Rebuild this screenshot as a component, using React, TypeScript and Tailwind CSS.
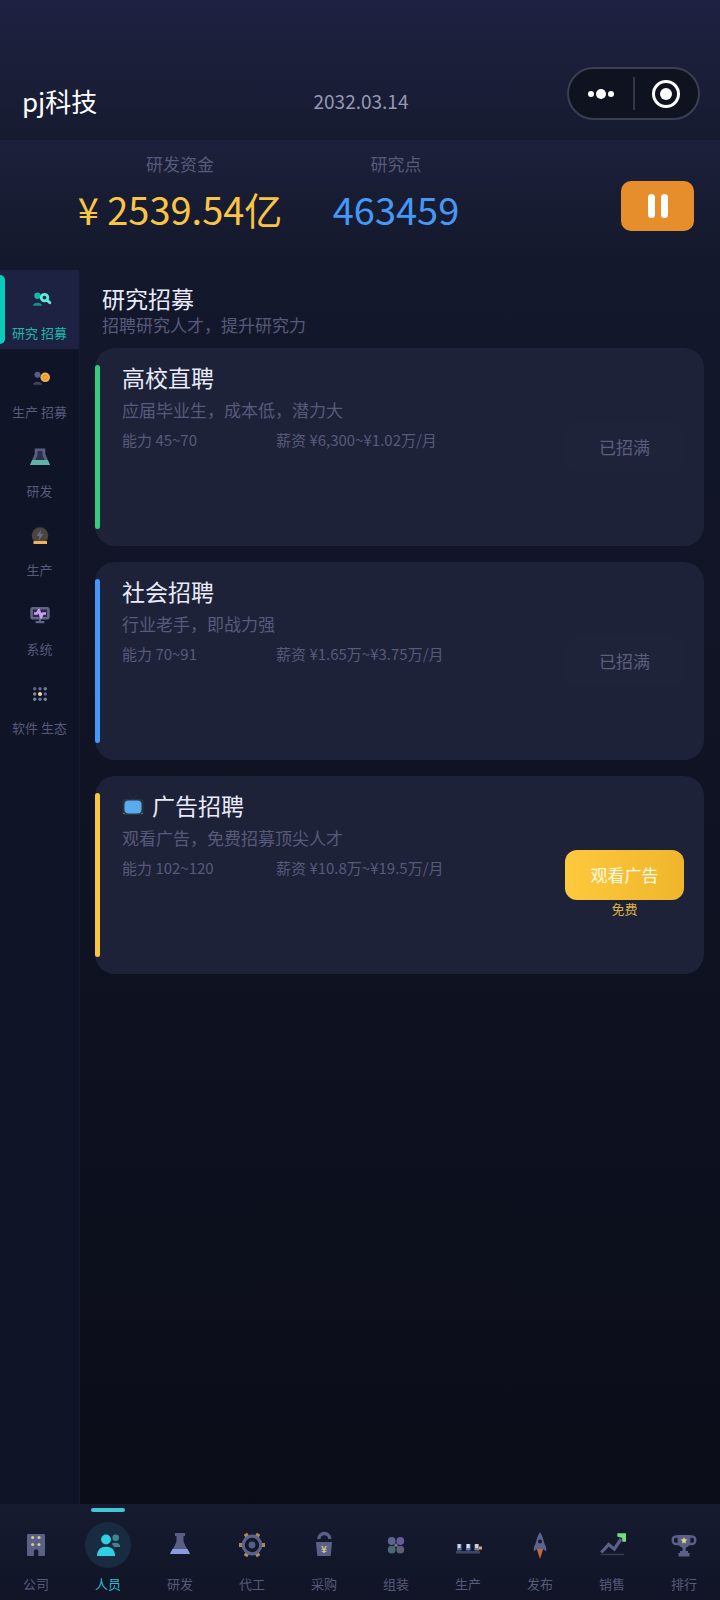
import { useState, ReactNode } from 'react';

interface Entry {
  id: string;
  label: string;
  icon: ReactNode;
}

interface Channel {
  id: string;
  title: string;
  desc: string;
  ability: string;
  salary: string;
  bar: string;
  ad?: boolean;
}

const sideItems: Entry[] = [
  {
    id: 'research-hire',
    label: '研究 招募',
    icon: (
      <>
        <circle cx="9.5" cy="8.7" r="3.2" fill="#14b8a6" />
        <path d="M5 18.7c0-2 2-3 4.5-3s4.5 1 4.5 3z" fill="#178f88" />
        <path d="M18.8 13l3 2.7" stroke="#5eead4" strokeWidth="3" strokeLinecap="round" />
        <circle cx="16.5" cy="10.6" r="3.3" fill="#1d2c4c" stroke="#5eead4" strokeWidth="2.8" />
      </>
    ),
  },
  {
    id: 'factory-hire',
    label: '生产 招募',
    icon: (
      <>
        <circle cx="9.5" cy="8.7" r="3" fill="#5a5d8c" />
        <path d="M5 18.7c0-2 2-3 4.5-3s4.5 1 4.5 3z" fill="#3f4360" />
        <circle cx="17.2" cy="11.3" r="4.8" fill="#f5ad4e" />
        <circle cx="17.2" cy="11.3" r="2" stroke="#dc8b2c" strokeWidth="1" />
      </>
    ),
  },
  {
    id: 'research',
    label: '研发',
    icon: (
      <>
        <path d="M6.7 3.5h10.6V9L22 20H2L6.7 9z" fill="#5a5e80" />
        <path d="M9.5 6h5v4l2 5h-9l2-5z" fill="#293048" />
        <path d="M4.2 15h15.6L22 20H2z" fill="#5fb3a6" />
      </>
    ),
  },
  {
    id: 'production',
    label: '生产',
    icon: (
      <>
        <circle cx="12" cy="11.5" r="8.3" fill="#4a443f" />
        <path d="M13 5.5L8.5 12h3l-1 5 5-7h-3z" fill="#666a8c" />
        <rect x="5.5" y="17" width="13.5" height="3" fill="#f2b15c" />
      </>
    ),
  },
  {
    id: 'system',
    label: '系统',
    icon: (
      <>
        <rect x="3.6" y="5.2" width="16.8" height="10" rx="1.5" fill="#2a2748" stroke="#626684" strokeWidth="2.6" />
        <path d="M12 16v3M8.5 19.2h7" stroke="#626684" strokeWidth="2.2" strokeLinecap="round" />
        <path d="M6 10.5h3l2-3.5 2 7.5 1.5-4H18" stroke="#c4a0f5" strokeWidth="2.6" strokeLinejoin="round" />
      </>
    ),
  },
  {
    id: 'software',
    label: '软件 生态',
    icon: (
      <>
        <circle cx="6.7" cy="6.7" r="1.7" fill="#5f6296" />
        <circle cx="12" cy="6.7" r="1.7" fill="#7563ad" />
        <circle cx="17.3" cy="6.7" r="1.7" fill="#5a8a8a" />
        <circle cx="6.7" cy="12" r="1.7" fill="#8d8496" />
        <circle cx="12" cy="12" r="2" fill="#f4e08a" />
        <circle cx="17.3" cy="12" r="1.7" fill="#5a5fa8" />
        <circle cx="6.7" cy="17.3" r="1.7" fill="#5c8f85" />
        <circle cx="12" cy="17.3" r="1.7" fill="#6a72ae" />
        <circle cx="17.3" cy="17.3" r="1.7" fill="#7c7f98" />
      </>
    ),
  },
];

const tabs: Entry[] = [
  {
    id: 'company',
    label: '公司',
    icon: (
      <>
        <path d="M6 3h16a1 1 0 0 1 1 1v20a1 1 0 0 1-1 1h-5.7v-4.5a2.2 2.2 0 0 0-4.4 0V25H6a1 1 0 0 1-1-1V4a1 1 0 0 1 1-1z" fill="#5c6086" />
        <g fill="#d3cf90">
          <circle cx="10.6" cy="6.6" r="1.5" />
          <circle cx="17" cy="6.6" r="1.5" />
          <circle cx="10.6" cy="13.5" r="1.5" />
          <circle cx="17" cy="13.5" r="1.5" />
        </g>
      </>
    ),
  },
  {
    id: 'staff',
    label: '人员',
    icon: (
      <>
        <circle cx="12" cy="8.5" r="4.9" fill="#2fd0e4" />
        <path d="M3 25c0-6 3.5-9.2 9-9.200S21 19 21 25z" fill="#2fd0e4" />
        <circle cx="21.7" cy="6.7" r="3.3" fill="#3f8790" />
        <path d="M17.8 12.8c1-.8 2.3-1.1 3.9-1.1 2.8 0 4.5 1.7 4.5 4.3h-6z" fill="#3f8790" />
      </>
    ),
  },
  {
    id: 'rd',
    label: '研发',
    icon: (
      <>
        <path d="M9 2h10v3h-1.5v4c0 3.5 3 7 6.5 14H4c3.5-7 6.5-10.5 6.5-14V5H9z" fill="#5a5e84" />
        <path d="M6.5 18h15L24 23H4z" fill="#8b9ae0" />
      </>
    ),
  },
  {
    id: 'oem',
    label: '代工',
    icon: (
      <>
        <g stroke="#b0885f" strokeWidth="4">
          <path d="M1 14h4M23 14h4M7.5 2.7l2 3.5M18.5 21.8l2 3.5M20.5 2.7l-2 3.5M9.5 21.8l-2 3.5" />
        </g>
        <circle cx="14" cy="14" r="8.8" stroke="#5c6187" strokeWidth="3.2" />
        <circle cx="14" cy="14" r="3.4" fill="#536083" />
      </>
    ),
  },
  {
    id: 'purchase',
    label: '采购',
    icon: (
      <>
        <path d="M8.8 8a5.5 5.5 0 0 1 11 0" stroke="#5c6086" strokeWidth="3.4" />
        <path d="M6 11h16l-1.3 14H7.3z" fill="#5c6086" />
        <text x="14" y="21.5" textAnchor="middle" fontSize="10" fontWeight="700" fill="#cdc785">¥</text>
      </>
    ),
  },
  {
    id: 'assembly',
    label: '组装',
    icon: (
      <>
        <path d="M10 10l8 8M18 10l-8 8" stroke="#4d5275" strokeWidth="1.5" />
        <circle cx="9.7" cy="10" r="3.9" fill="#5d648a" />
        <circle cx="18.3" cy="10" r="3.9" fill="#665a98" />
        <circle cx="9.7" cy="18.6" r="3.9" fill="#466b74" />
        <circle cx="18.3" cy="18.6" r="3.9" fill="#5f6078" />
        <circle cx="14" cy="14.3" r="1.5" fill="#71759a" />
      </>
    ),
  },
  {
    id: 'line',
    label: '生产',
    icon: (
      <>
        <rect x="2" y="20" width="24" height="2.6" fill="#3f435f" />
        <rect x="3" y="13" width="4.5" height="6.5" fill="#5f6fa0" />
        <rect x="12" y="13" width="4.5" height="6.5" fill="#5f7db4" />
        <rect x="20.5" y="13" width="4.5" height="6.5" fill="#7b7f96" />
        <rect x="3.8" y="13" width="2.8" height="4" fill="#c8d4ee" />
        <rect x="12.8" y="13" width="2.8" height="4" fill="#d4e4fa" />
        <rect x="21.2" y="13" width="2.8" height="4" fill="#cfd3dd" />
        <rect x="25" y="15.5" width="3" height="3" fill="#d9a86c" />
      </>
    ),
  },
  {
    id: 'launch',
    label: '发布',
    icon: (
      <>
        <path d="M10.8 18h6.4L14 28z" fill="#c2683c" />
        <path d="M14 1c2.2 3.5 3.5 7 4 10.5l2.2 5v4L17 18h-6l-3.2 2.5v-4l2.2-5C10.5 8 11.8 4.5 14 1z" fill="#5a648e" />
        <circle cx="14" cy="10.5" r="2" fill="#161a30" />
      </>
    ),
  },
  {
    id: 'sales',
    label: '销售',
    icon: (
      <>
        <path d="M2.5 23.5h23.5" stroke="#343850" strokeWidth="1.5" />
        <path d="M3.3 21.5l7.4-8 5.6 4.7L23 8" stroke="#5c6086" strokeWidth="3.2" />
        <path d="M19.3 2.2h8.7v8.5h-3.6l-.3-3.7-4.8-1.5z" fill="#6fdf7c" />
      </>
    ),
  },
  {
    id: 'rank',
    label: '排行',
    icon: (
      <>
        <path d="M9 5.5H6.5c-2.2 0-3.8 1.5-3.8 3.7s1.6 3.8 4.3 3.8h3M19 5.5h2.5c2.2 0 3.8 1.5 3.8 3.7S23.7 13 21 13h-3" stroke="#5c6086" strokeWidth="2.4" />
        <path d="M7.5 4h13v5.5c0 4-2 6.5-4.8 7.2V20h2.3v2h1.5v3.5h-11V22H10v-2h2.5v-3.3c-3-.7-5-3.2-5-7.2z" fill="#5c6086" />
        <path d="M14 6.2l1 2.1 2.3.3-1.7 1.6.4 2.3-2-1.1-2 1.1.4-2.3-1.7-1.6 2.3-.3z" fill="#ddd68a" />
      </>
    ),
  },
];

const channels: Channel[] = [
  {
    id: 'campus',
    title: '高校直聘',
    desc: '应届毕业生，成本低，潜力大',
    ability: '45~70',
    salary: '¥6,300~¥1.02万/月',
    bar: 'bg-[#34cb80]',
  },
  {
    id: 'social',
    title: '社会招聘',
    desc: '行业老手，即战力强',
    ability: '70~91',
    salary: '¥1.65万~¥3.75万/月',
    bar: 'bg-[#4498fa]',
  },
  {
    id: 'ad',
    title: '广告招聘',
    desc: '观看广告，免费招募顶尖人才',
    ability: '102~120',
    salary: '¥10.8万~¥19.5万/月',
    bar: 'bg-[#fac540]',
    ad: true,
  },
];

function TvIcon() {
  return (
    <svg className="size-[22px]" viewBox="0 0 22 22" aria-hidden="true">
      <path d="M7 1l4 4 4-4" fill="none" stroke="#272d42" strokeWidth="1" />
      <rect x="0.5" y="5" width="21" height="16" rx="2" fill="#26343f" />
      <rect x="2.5" y="6.5" width="17" height="13" rx="4" fill="#5aaaf0" />
      <circle cx="2" cy="19.5" r="0.8" fill="#6f7c52" />
      <circle cx="20" cy="19.5" r="0.8" fill="#6f7c52" />
    </svg>
  );
}

function ChannelCard({ channel }: { channel: Channel }) {
  return (
    <article className="flex min-h-[198px] rounded-[20px] bg-[#1d2238] py-[17px] pr-5">
      <div className={`w-[5px] shrink-0 rounded-full ${channel.bar}`} />
      <div className="ml-[22px] flex-1">
        <h2 className="flex items-center gap-2 text-[23px] leading-6 text-[#e9ebfa]">
          {channel.ad && <TvIcon />}
          {channel.title}
        </h2>
        <p className="mt-2.5 text-[17px] leading-[22px]">{channel.desc}</p>
        <div className="mt-2 flex text-[15px] leading-[22px]">
          <span className="w-[154px]">能力 {channel.ability}</span>
          <span>薪资 {channel.salary}</span>
        </div>
      </div>
      <div className="relative self-center">
        {channel.ad ? (
          <>
            <button type="button" className="block h-[50px] w-[119px] rounded-xl bg-linear-to-r from-[#fec93c] to-[#efb62b] text-[17px] text-[#fffbe8]">
              观看广告
            </button>
            <span className="absolute inset-x-0 top-full text-center text-[13px] leading-[18px] text-[#dcae45]">免费</span>
          </>
        ) : (
          <button type="button" disabled className="block h-[50px] w-[119px] rounded-xl bg-[#1f233a] text-[17px] text-[#5b5e7d]">
            已招满
          </button>
        )}
      </div>
    </article>
  );
}

export default function App() {
  const [section, setSection] = useState('research-hire');
  const [tab, setTab] = useState('staff');
  const [paused, setPaused] = useState(false);

  return (
    <div className="flex min-h-screen flex-col bg-linear-to-b from-[#151a30] to-[#0a0c17] font-['Noto_Sans_CJK_SC',sans-serif] text-[#575a7a]">
      <header className="grid grid-cols-[1fr_auto_1fr] items-end bg-linear-to-b from-[#1e2141] to-[#171b30] pt-[67px] pr-5 pb-5 pl-[22px]">
        <h1 className="text-[26px] leading-[38px] text-white">pj科技</h1>
        <time className="text-[19px] leading-[38px] text-[#9598b3]">2032.03.14</time>
        <div className="flex h-[53px] w-[133px] items-center justify-self-end rounded-full border-2 border-[#3c3f52] bg-[#0f121f]">
          <button type="button" aria-label="更多" className="flex h-full flex-1 items-center justify-center gap-0.5">
            <span className="size-1.5 rounded-full bg-white" />
            <span className="size-2.5 rounded-full bg-white" />
            <span className="size-1.5 rounded-full bg-white" />
          </button>
          <span className="h-[33px] w-0.5 bg-[#34374a]" />
          <button type="button" aria-label="关闭" className="flex h-full flex-1 items-center justify-center">
            <span className="flex size-7 items-center justify-center rounded-full border-3 border-white">
              <span className="size-3 rounded-full bg-white" />
            </span>
          </button>
        </div>
      </header>

      <section className="flex items-end bg-linear-to-b from-[#1c203a] to-[#14182b] pt-3 pr-[26px] pb-[37px] pl-[72px] text-center">
        <div className="w-[216px]">
          <p className="text-[17px] leading-6">研发资金</p>
          <p className="mt-[9px] text-[38px] leading-[48px] whitespace-nowrap text-[#f8c544]">¥ 2539.54亿</p>
        </div>
        <div className="w-[216px]">
          <p className="text-[17px] leading-6">研究点</p>
          <p className="mt-[9px] text-[38px] leading-[48px] text-[#4598f5]">463459</p>
        </div>
        <button
          type="button"
          aria-label={paused ? '继续' : '暂停'}
          onClick={() => setPaused(!paused)}
          className="mb-0.5 ml-auto flex h-[50px] w-[73px] items-center justify-center gap-1.5 rounded-[10px] bg-[#e58e2b]"
        >
          <span className="h-6 w-[7px] rounded-full bg-white" />
          <span className="h-6 w-[7px] rounded-full bg-white" />
        </button>
      </section>

      <div className="flex flex-1">
        <aside className="w-20 shrink-0 border-r border-[#151a30] bg-[#0f1427]">
          {sideItems.map((item) => (
            <button
              key={item.id}
              type="button"
              onClick={() => setSection(item.id)}
              className={`relative flex h-[79px] w-full flex-col items-center pt-[17px] text-[13px] leading-[18px] ${section === item.id ? 'bg-[#1d2242] text-[#1cb8ab]' : ''}`}
            >
              {section === item.id && <span className="absolute inset-y-[5px] left-0 w-[5px] rounded-r-full bg-[#08cdb8]" />}
              <svg className="mb-[13px] size-6" viewBox="0 0 24 24" fill="none" aria-hidden="true">
                {item.icon}
              </svg>
              {item.label}
            </button>
          ))}
        </aside>

        <main className="flex-1 px-4 pt-3 pl-[15px]">
          <div className="mb-3 px-[7px]">
            <h2 className="text-[23px] leading-8 text-[#e9ebfa]">研究招募</h2>
            <p className="text-[17px] leading-[22px]">招聘研究人才，提升研究力</p>
          </div>
          <div className="flex flex-col gap-4">
            {channels.map((channel) => (
              <ChannelCard key={channel.id} channel={channel} />
            ))}
          </div>
        </main>
      </div>

      <nav className="grid grid-cols-10 bg-linear-to-b from-[#171b30] to-[#101426]">
        {tabs.map((item) => (
          <button
            key={item.id}
            type="button"
            onClick={() => setTab(item.id)}
            className={`relative flex flex-col items-center pt-[18px] pb-[7px] text-[13px] leading-[18px] ${tab === item.id ? 'text-[#2fbdd0]' : ''}`}
          >
            {tab === item.id && <span className="absolute top-1 h-1 w-[34px] rounded-full bg-[#41c6d8]" />}
            <span className={`mb-[7px] flex size-[46px] items-center justify-center rounded-full ${tab === item.id ? 'bg-[#182b41]' : ''}`}>
              <svg className="size-7" viewBox="0 0 28 28" fill="none" aria-hidden="true">
                {item.icon}
              </svg>
            </span>
            {item.label}
          </button>
        ))}
      </nav>
    </div>
  );
}
